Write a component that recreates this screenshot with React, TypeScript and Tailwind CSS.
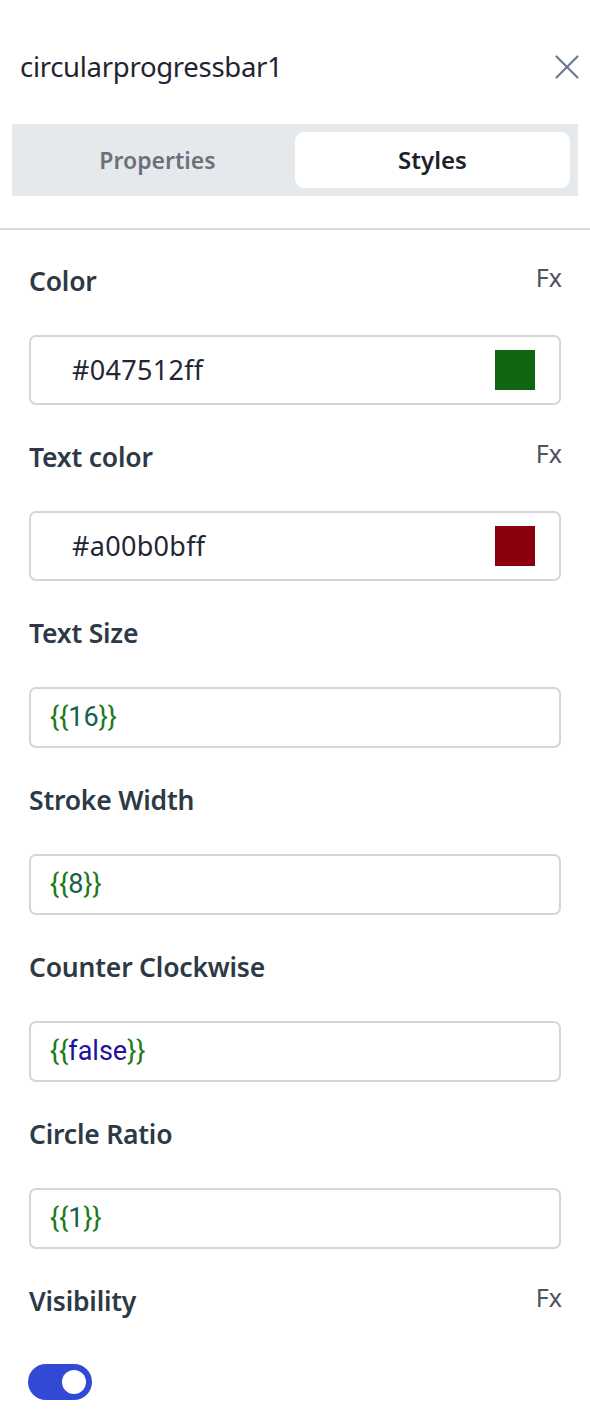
import React from 'react';

const labelFont = { fontFamily: '"Noto Sans", "Open Sans", sans-serif' };
const codeFont = { fontFamily: 'Roboto, "Noto Sans", sans-serif' };

const FieldLabel = ({ text, fx }: { text: string; fx?: boolean }) => (
  <div className="flex items-center justify-between h-[30px]">
    <span className="text-[26.5px] font-semibold text-[#2d3a46] tracking-[-0.2px]">{text}</span>
    {fx && <span className="text-[25px] text-[#4b5260] -mt-[8px] mr-[-1px]">Fx</span>}
  </div>
);

const ColorInput = ({ value, swatch }: { value: string; swatch: string }) => (
  <div className="flex items-center justify-between h-[70px] border-2 border-[#d4d6d9] rounded-[7px] pl-[41px] pr-[24px]">
    <span className="text-[27px] text-[#1f2733] tracking-[0.3px]">{value}</span>
    <span className="w-[40px] h-[40px]" style={{ backgroundColor: swatch }} />
  </div>
);

const CodeInput = ({ value, kind }: { value: string; kind: 'number' | 'atom' }) => (
  <div className="flex items-center h-[61px] border-2 border-[#d4d6d9] rounded-[7px] pl-[19px]" style={codeFont}>
    <span className="text-[27px] text-[#1d7a17]">{'{{'}</span>
    <span className={kind === 'number' ? 'text-[27px] text-[#17614a]' : 'text-[27px] text-[#221199]'}>{value}</span>
    <span className="text-[27px] text-[#1d7a17]">{'}}'}</span>
  </div>
);

export default function App() {
  return (
    <div className="w-[590px] h-[1424px] bg-white" style={labelFont}>
      {/* Header */}
      <div className="flex items-center justify-between h-[34px] mt-[50px] pl-[20px] pr-[11px]">
        <span className="text-[27.5px] text-[#1f2530] tracking-[-0.3px]">circularprogressbar1</span>
        <svg width="24" height="24" viewBox="0 0 24 24" fill="none" stroke="#6b7a91" strokeWidth="2.2" strokeLinecap="round">
          <path d="M1.5 1.5 L22.5 22.5 M22.5 1.5 L1.5 22.5" />
        </svg>
      </div>

      {/* Tabs */}
      <div className="mx-[12px] mt-[40px] h-[72px] bg-[#e6e9ec] p-[8px] grid grid-cols-2">
        <div className="flex items-center justify-center text-[23px] font-semibold text-[#69717c]">Properties</div>
        <div className="flex items-center justify-center bg-white rounded-[9px] text-[24px] font-semibold text-[#1c222b]">Styles</div>
      </div>

      <div className="mt-[32px] border-t-2 border-[#d8dbdf]" />

      {/* Fields */}
      <div className="flex flex-col gap-[38px] px-[29px] pt-[37px]">
        <div className="flex flex-col gap-[38px]">
          <FieldLabel text="Color" fx />
          <ColorInput value="#047512ff" swatch="#0f6511" />
        </div>
        <div className="flex flex-col gap-[38px]">
          <FieldLabel text="Text color" fx />
          <ColorInput value="#a00b0bff" swatch="#8b000a" />
        </div>
        <div className="flex flex-col gap-[38px]">
          <FieldLabel text="Text Size" />
          <CodeInput value="16" kind="number" />
        </div>
        <div className="flex flex-col gap-[38px]">
          <FieldLabel text="Stroke Width" />
          <CodeInput value="8" kind="number" />
        </div>
        <div className="flex flex-col gap-[38px]">
          <FieldLabel text="Counter Clockwise" />
          <CodeInput value="false" kind="atom" />
        </div>
        <div className="flex flex-col gap-[38px]">
          <FieldLabel text="Circle Ratio" />
          <CodeInput value="1" kind="number" />
        </div>
        <div className="flex flex-col gap-[47px]">
          <FieldLabel text="Visibility" fx />
          <div className="w-[64px] h-[36px] rounded-full bg-[#3249d6] flex items-center justify-end pr-[6px] -ml-[1px]">
            <span className="w-[24px] h-[24px] rounded-full bg-white" />
          </div>
        </div>
      </div>
    </div>
  );
}
